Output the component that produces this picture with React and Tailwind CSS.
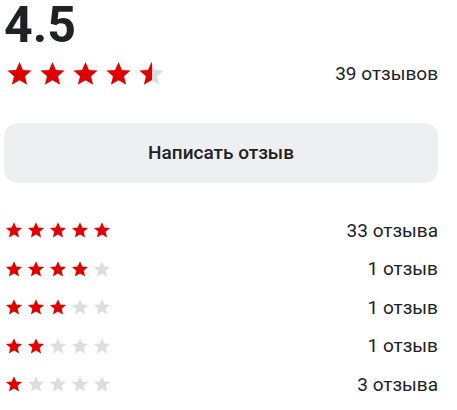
import React from "react";

const RED = "#e00000";
const GRAY = "#dcdde0";

const STAR_PATH =
  "M12 1.2l3.1 7.1 7.7.6-5.9 5 1.9 7.6L12 17.4l-6.8 4.1 1.9-7.6-5.9-5 7.7-.6z";

const Star = ({ fill = 1, size = 26, id }) => {
  // fill: 0..1, part coloured red from the left
  return (
    <svg width={size} height={size} viewBox="0 0 24 23" className="block shrink-0">
      <defs>
        <linearGradient id={id} x1="0" x2="1" y1="0" y2="0">
          <stop offset={fill} stopColor={RED} />
          <stop offset={fill} stopColor={GRAY} />
        </linearGradient>
      </defs>
      <path d={STAR_PATH} fill={`url(#${id})`} />
    </svg>
  );
};

const Stars = ({ value, size, gap, prefix }) => (
  <div className={`flex items-center ${gap}`}>
    {[0, 1, 2, 3, 4].map((i) => {
      const f = Math.max(0, Math.min(1, value - i));
      return <Star key={i} fill={f} size={size} id={`${prefix}-${i}`} />;
    })}
  </div>
);

const rows = [
  { stars: 5, label: "33 отзыва" },
  { stars: 4, label: "1 отзыв" },
  { stars: 3, label: "1 отзыв" },
  { stars: 2, label: "1 отзыв" },
  { stars: 1, label: "3 отзыва" },
];

export default function App() {
  return (
    <div
      className="w-[457px] h-[410px] bg-white pl-1 pr-[19px] text-[#202124]"
      style={{ fontFamily: "Roboto, 'Noto Sans', sans-serif" }}
    >
      {/* Average */}
      <div className="h-[52px] text-[50px] leading-[50px] font-bold">4.5</div>

      <div className="mt-2 h-[26px] flex items-center justify-between">
        <div className="pl-[2px]">
          <Stars value={4.5} size={27} gap="gap-[6px]" prefix="big" />
        </div>
        <span className="text-[19px] leading-none">39 отзывов</span>
      </div>

      {/* Button */}
      <button className="mt-[37px] w-full h-[60px] rounded-[14px] bg-[#eeeff1] text-[19px] font-medium">
        Написать отзыв
      </button>

      {/* Breakdown */}
      <div className="mt-[28px] flex flex-col">
        {rows.map((r) => (
          <div key={r.stars} className="h-[38.5px] flex items-center justify-between">
            <div className="pl-[1px]">
              <Stars value={r.stars} size={18} gap="gap-[4px]" prefix={`r${r.stars}`} />
            </div>
            <span className="text-[19px] leading-none">{r.label}</span>
          </div>
        ))}
      </div>
    </div>
  );
}
